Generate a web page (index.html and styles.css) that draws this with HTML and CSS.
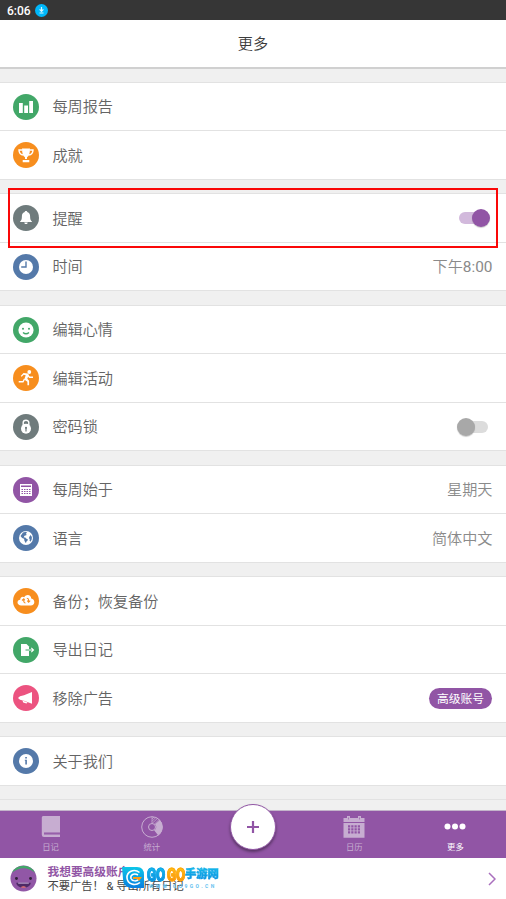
FILE: index.html
```html
<!DOCTYPE html>
<html lang="zh-CN">
<head>
<meta charset="utf-8">
<title>更多</title>
<link rel="stylesheet" href="styles.css">
</head>
<body>
<div class="app">
  <div class="status"><span>6:06</span>
    <svg class="dl" viewBox="0 0 13 13"><circle cx="6.5" cy="6.5" r="6.5" fill="#00b8fb"/><path d="M6.5 3v4M4.6 5.4l1.9 2 1.9-2M4.5 9h4" fill="none" stroke="#d8f5ff" stroke-width="1.2"/></svg>
  </div>
  <header class="title"><span>更多</span></header>
  <main class="list">
    <section class="group">
      <div class="row"><svg class="icon green" viewBox="0 0 26 26"><path d="M6 9h3.8v10H6zM11.200 11.500H15V19h-3.800zM16.200 7H20v12h-3.800z"/></svg><span class="label">每周报告</span></div>
      <div class="row"><svg class="icon orange" viewBox="0 0 26 26"><path d="M9 6.500h8c0 5-1.200 8-3 8.800V17h-2v-1.700C10.200 14.500 9 11.500 9 6.500zM9.700 18h6.600v2.200H9.700z"/><path class="line" d="M9.300 8H6c0 3 1.500 4.700 4.500 5M16.700 8H20c0 3-1.500 4.700-4.500 5"/></svg><span class="label">成就</span></div>
    </section>
    <section class="group">
      <div class="row"><svg class="icon gray" viewBox="0 0 26 26"><path d="M13 6c.9 0 1.300.6 1.300 1.100 2.200.8 2.800 2.500 2.800 4.500 0 2.800.5 4 2.100 5.400H6.800c1.600-1.400 2.100-2.600 2.100-5.400 0-2 .6-3.700 2.800-4.500C11.700 6.600 12.100 6 13 6zM11.300 17.600h3.400c0 2-3.400 2-3.400 0z"/></svg><span class="label">提醒</span><span class="switch on"></span></div>
      <div class="row"><svg class="icon blue" viewBox="0 0 26 26"><circle cx="13" cy="13" r="7"/><path class="line i" d="M13 7.500V13H8.200"/></svg><span class="label">时间</span><span class="value">下午<span class="num">8:00</span></span></div>
    </section>
    <section class="group">
      <div class="row"><svg class="icon green" viewBox="0 0 26 26"><circle cx="13" cy="13" r="7.600"/><circle class="i-fill" cx="10" cy="11.700" r="1"/><circle class="i-fill" cx="16" cy="11.700" r="1"/><path class="line i" d="M10 15.500q3 2.600 6 0"/></svg><span class="label">编辑心情</span></div>
      <div class="row"><svg class="icon orange" viewBox="0 0 26 26"><circle cx="16.300" cy="7" r="1.900"/><path d="M10.500 8l4.300.6 1 1.400-1.500 3.800 1.800 2v4.400h-1.700v-3.500l-3.200-2.300 1.500-4.200-2-.4-2 2-1-.8z"/><path class="line" d="M14.500 10l2 2.200H20M11.500 14l-1.500 2.800-4.300-.1"/></svg><span class="label">编辑活动</span></div>
      <div class="row"><svg class="icon gray" viewBox="0 0 26 26"><circle cx="13" cy="14.800" r="5"/><path class="line" d="M10.200 11.500V8.500c0-3 5.600-3 5.600 0v3"/><path class="i-fill" d="M11.900 13.900a1.100 1.100 0 1 1 2.200 0l-.5 1v2.500h-1.200v-2.500z"/></svg><span class="label">密码锁</span><span class="switch"></span></div>
    </section>
    <section class="group">
      <div class="row"><svg class="icon purple" viewBox="0 0 26 26"><path d="M7 7h12v12H7z"/><path class="i-fill" d="M8 8.500h10v1.500H8z"/><path class="dots" d="M8.500 12.500h9M8.500 14.500h9M8.500 16.500h9"/></svg><span class="label">每周始于</span><span class="value">星期天</span></div>
      <div class="row"><svg class="icon blue" viewBox="0 0 26 26"><circle cx="13" cy="13" r="7"/><path class="i-fill" d="M7.500 11l2.500-3.500 3-.8 1 1-1.200 1 1 1.300-2.300.8-.8 1.400 2 .6.300.8 1.300.3.700 1.200-1.500 1.500-.6 1.700-1.500-2.500-.3-2-2-.8zM16.500 11.500l1-1.500 1.400 2-.2 2.400-1.200 2.400-1-1.300.3-1.500-1-.7z"/></svg><span class="label">语言</span><span class="value">简体中文</span></div>
    </section>
    <section class="group">
      <div class="row"><svg class="icon orange" viewBox="0 0 26 26"><path d="M8.200 17.500c-4.400 0-5-5.300-1-5.700C7.200 8.700 10 8 11.200 9.200c2.200-4 7.300-2.200 7 1.300 4.200.5 4.300 7-.5 7z"/><path class="line thin i" d="M9 12.500l1.800-1.700 1 1.500M10.800 11v2.500q.2 1.500 1.700 1.500M17.200 12.700l-1.600 1.600-1.400-1.600M15.600 14v-2.300q-.2-1.500-1.800-1.500"/></svg><span class="label">备份；恢复备份</span></div>
      <div class="row"><svg class="icon green" viewBox="0 0 26 26"><path d="M8 7h5.500L16 9.500V19H8z"/><path class="line thin i" d="M12.500 13H16"/><path class="line thin" d="M16 13h4.300M18.300 10.800l2.200 2.200-2.200 2.200"/></svg><span class="label">导出日记</span></div>
      <div class="row"><svg class="icon pink" viewBox="0 0 26 26"><path d="M19 7v11.800l-8-3-4-1-2-1.800 2-1.800 4-.9zM9.500 15.500l5 2-1 .9-3.300-.9z"/></svg><span class="label">移除广告</span><span class="pill"><span>高级账号</span></span></div>
    </section>
    <section class="group">
      <div class="row"><svg class="icon blue" viewBox="0 0 26 26"><circle cx="13" cy="13" r="7"/><path class="i-fill" d="M12.200 9h1.700v1.500h-1.700zM11.800 11.800h2.100v4.700h-1.600v-3.700h-.5z"/></svg><span class="label">关于我们</span></div>
    </section>
    <section class="group"></section>
    <div class="highlight"></div>
  </main>
  <nav class="tabs">
    <div class="tab"><svg viewBox="0 0 24 24"><path d="M4.500 1H21v16.500H5v1.300h16V22H5a2.200 2.200 0 0 1-2.200-2.200V2.700C2.800 1.500 3.500 1 4.500 1z"/><path class="cut" d="M5 19h16"/></svg><span>日记</span></div>
    <div class="tab"><svg viewBox="0 0 24 24"><circle class="ring" cx="12" cy="12" r="10.300"/><circle class="ring" cx="12" cy="12" r="3.500"/><path d="M15 9.200L19.800 5a10.300 10.300 0 0 1-1.500 15.500l-4.200-5.300a3.600 3.600 0 0 0 .9-6z"/><path class="ring hatch" d="M12 1.700v6.800M14.300 9.300l5-5M12 4l2-2M12 6.300l4-4M12 8.500l5.700-5.300"/></svg><span>统计</span></div>
    <div class="tab add"><div class="fab"><svg viewBox="0 0 14 14"><path d="M7 1v12M1 7h12"/></svg></div></div>
    <div class="tab"><svg viewBox="0 0 24 24"><path d="M1.500 3h21v4h-21zM1.500 8h21v14.700h-21z"/><path d="M5 1h3v4H5zM16 1h3v4h-3z"/><path class="days" d="M6 11.300h12M6 14.300h12M6 17.300h12"/><path class="cut pins" d="M6.500 2.500v2M17.500 2.500v2"/></svg><span>日历</span></div>
    <div class="tab active"><svg viewBox="0 0 24 24"><circle cx="4.500" cy="11.500" r="3"/><circle cx="12" cy="11.500" r="3"/><circle cx="19.500" cy="11.500" r="3"/></svg><span>更多</span></div>
  </nav>
  <footer class="promo">
    <svg class="face" viewBox="0 0 28 28"><circle cx="14" cy="14" r="13.500" fill="#9157a6"/><path d="M2 8a13.500 13.500 0 0 1 24 0Q14-1.500 2 8z" fill="#42a768"/><circle cx="6.700" cy="14" r="1.500" fill="#30203a"/><circle cx="21.300" cy="14" r="1.500" fill="#30203a"/><path d="M6.500 18.300h15c-.5 7-14.500 7-15 0z" fill="#4d2a66"/><path d="M8.500 18.300h11v1h-11z" fill="#cdb5dc"/><path d="M11 23q3-2 6 0-3 1.200-6 0z" fill="#f0787c"/></svg>
    <div class="copy"><b>我想要高级账户</b><span>不要广告！ &amp; 导出所有日记</span></div>
    <svg class="arrow" viewBox="0 0 8 14"><path d="M1 1l6 6-6 6"/></svg>
    <div class="mark">
      <svg class="mark-logo" viewBox="0 0 23 23"><defs><linearGradient id="sea" x2="0" y2="1"><stop stop-color="#0cc6e8"/><stop offset="1" stop-color="#087ee0"/></linearGradient></defs><path d="M0 1h15q7 0 7 8v13H9q-8-1-8-9z" fill="url(#sea)"/><path d="M17.500 6.500C12 2 4.500 6 5 12s8 8.500 13 4.500" fill="none" stroke="#fff" stroke-width="1.600"/><path d="M16 9c-4-2.500-8 0-7 3.500 1 3 6 3 7.500 1" fill="none" stroke="#fff" stroke-width="1.500"/><path d="M11 11h9l-3 4-2-2h-4z" fill="#ff9c10"/></svg>
      <div class="mark-text"><div class="mark-name"><i>GO</i><i class="gold">GO</i><em>手游网</em></div><small>WWW.GO9GO.CN</small></div>
    </div>
  </footer>
</div>
</body>
</html>
```
FILE: styles.css
```css
* { box-sizing: border-box; }
body { margin: 0; font-family: Roboto, "Noto Sans CJK SC", sans-serif; }
.app { width: 506px; height: 899px; display: flex; flex-direction: column; overflow: hidden; background: #f0f0f0; }
.status { height: 20px; flex: none; background: #363636; color: #fff; display: flex; align-items: center; gap: 4px; padding: 1px 7px 0; font-size: 12px; font-weight: 500; }
.dl { width: 13px; height: 13px; }
.title { height: 49px; flex: none; background: #fff; border-bottom: 2px solid #d0d0d0; display: flex; align-items: center; justify-content: center; font-size: 15.15px; font-weight: 350; color: #3c3c3c; padding-bottom: 4px; }
.list { flex: 1; min-height: 0; padding-top: 12.8px; position: relative; overflow: hidden; }
.group { border-bottom: 1px solid #e2e2e2; margin-bottom: 13.5px; }
.group:empty { border-bottom: 0; border-top: 1px solid #e2e2e2; }
.row { height: 48.5px; border-top: 1px solid #e2e2e2; background: #fff; display: flex; align-items: center; padding: 0 13.5px 0 13px; }
.icon { width: 26px; height: 26px; border-radius: 50%; fill: #fff; flex: none; }
.green { background: #42a768; color: #42a768; }
.orange { background: #f78e1e; color: #f78e1e; }
.gray { background: #6f7b7c; color: #6f7b7c; }
.blue { background: #5479a9; color: #5479a9; }
.purple { background: #9155a5; color: #9155a5; }
.pink { background: #ec5380; color: #ec5380; }
.line { fill: none; stroke: #fff; stroke-width: 1.4; }
.thin { stroke-width: 1.1; }
.i { stroke: currentColor; }
.i-fill { fill: currentColor; }
.dots { stroke: currentColor; stroke-width: 1; stroke-dasharray: 1.5 1; }
.label, .value { font-size: 15.15px; font-weight: 350; padding-bottom: 3px; }
.label { flex: 1; margin-left: 13.4px; color: #646464; }
.value { color: #8a8a8a; }
.num { font-size: 15.4px; font-weight: 400; }
.switch { width: 31px; height: 18px; margin-right: 3px; position: relative; display: flex; align-items: center; }
.switch:not(.on) { margin-right: 4.5px; }
.switch::before { content: ""; width: 27px; height: 12px; border-radius: 6px; background: #dcdcdc; margin-left: 4px; }
.switch::after { content: ""; position: absolute; left: 0; top: 0; width: 18px; height: 18px; border-radius: 50%; background: #a8a8a8; box-shadow: 0 1px 1px #0003; }
.switch.on::before { background: #d2b9dc; margin-left: 0; }
.switch.on::after { background: #9155a5; left: 13.5px; }
.pill { width: 63px; height: 21px; border-radius: 11px; background: #9155a5; color: #fff; font-size: 11.8px; display: flex; align-items: center; justify-content: center; padding-bottom: 1px; margin-right: .5px; }
.highlight { position: absolute; left: 8px; top: 119px; width: 490px; height: 60px; border: 2px solid #fa0808; }
.tabs { height: 47px; flex: none; display: flex; background: #9155a5; position: relative; box-shadow: 0 -1px 0 #c3b4ca; }
.tab { flex: 1; display: flex; flex-direction: column; align-items: center; padding-top: 4px; color: #c7add1; fill: currentColor; font-size: 8.3px; line-height: 12px; }
.tab > svg { width: 24px; height: 24px; margin-bottom: 1.5px; }
.tab.active { color: #fff; }
.cut { stroke: #9155a5; }
.pins { opacity: .6; }
.ring { fill: none; stroke: currentColor; }
.hatch { stroke-width: .7; }
.days { stroke: #9155a5; stroke-width: 2.2; stroke-dasharray: 2.2 1.06; }
.add { padding: 0; }
.fab { width: 46px; height: 46px; margin-top: -7px; flex: none; border-radius: 50%; background: #fff; border: 1px solid #9155a5; box-shadow: 0 2px 3px #0006; display: flex; align-items: center; justify-content: center; }
.fab svg { width: 14px; height: 14px; stroke: #9155a5; stroke-width: 2.2; }
.promo { height: 41px; flex: none; background: #fff; display: flex; align-items: center; padding: 0 10.5px 0 10px; position: relative; }
.face { width: 27px; height: 27px; }
.copy { flex: 1; margin: 2px 0 0 10.5px; display: flex; flex-direction: column; font-size: 11.25px; line-height: 14.5px; color: #444; }
.copy b { color: #9155a5; font-weight: 700; font-size: 11.7px; }
.arrow { width: 8px; height: 14px; fill: none; stroke: #a96fbd; stroke-width: 1.5; }
.mark { position: absolute; left: 122px; top: 8px; display: flex; gap: 2px; }
.mark-logo { width: 23px; height: 23px; }
.mark-text { display: flex; flex-direction: column; }
.mark-name { display: flex; align-items: center; height: 17px; }
.mark-name i, .mark-name em { font-style: normal; font-weight: 900; color: transparent; background: linear-gradient(#16c5ee, #087edc); -webkit-background-clip: text; background-clip: text; white-space: nowrap; }
.mark-name i { font-size: 19px; line-height: 20px; width: 28px; margin-right: -8.5px; transform-origin: left; transform: scaleX(.7); -webkit-text-stroke: 1px #12a4e8; }
.mark-name i.gold { background-image: linear-gradient(#ffcc18, #f98207); -webkit-text-stroke-color: #ffa60c; }
.mark-name em { font-size: 11.3px; line-height: 16px; margin-left: -1px; -webkit-text-stroke: .3px #10a0e6; }
.mark small { font: 700 5px/6px Roboto, sans-serif; letter-spacing: 2.4px; color: #65c2ef; margin-left: 2px; white-space: nowrap; }
```
